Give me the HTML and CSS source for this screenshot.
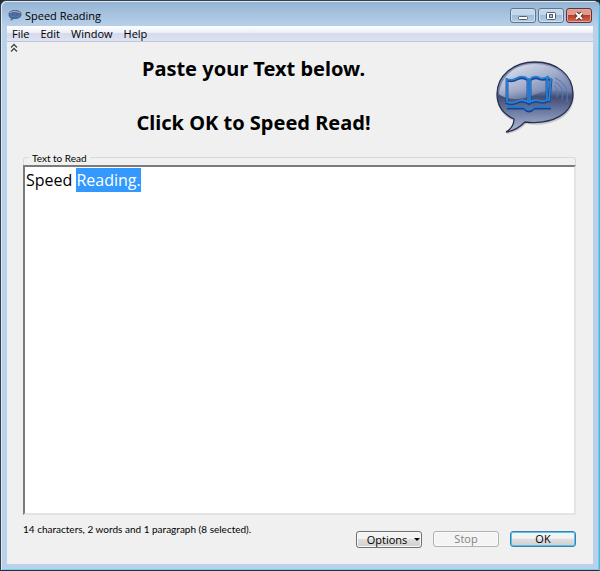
FILE: index.html
```
<!DOCTYPE html>
<html lang="en">
<head>
  <meta charset="UTF-8">
  <meta name="viewport" content="width=device-width, initial-scale=1.0">
  <title>Speed Reading</title>
  <link rel="stylesheet" href="styles.css">
</head>
<body>
  <div class="window">

    <!-- Title bar -->
    <header class="title-bar">
      <svg class="app-icon" viewBox="0 0 14 13" aria-hidden="true">
        <path d="M7 1C3 1 .5 3 .5 5.500c0 2 1 3.300 2.500 4L2.500 12l3-2C10 10.500 13.500 8.500 13.500 5.500S11 1 7 1z" fill="#50658f"/>
        <path d="M2 4q2-2 5-1.500t5 1" stroke="#a9b7d2" fill="none"/>
        <path d="M3 4.500v3h3.500l1 1 1-1H11v-3M7 4.500v3" stroke="#3a82cf" fill="none"/>
      </svg>
      <span class="title">Speed Reading</span>
      <div class="window-buttons">
        <button class="win-btn" aria-label="Minimize">
          <svg viewBox="0 0 12 10"><rect x="1.500" y="5.500" width="9" height="3" rx="1" fill="#fff" stroke="#535f70"/></svg>
        </button>
        <button class="win-btn" aria-label="Maximize">
          <svg viewBox="0 0 12 10"><rect x="1.500" y="1.500" width="9" height="7" rx="1" fill="#fff" stroke="#535f70"/><rect x="4.500" y="3.500" width="3" height="3" fill="#a9c4df" stroke="#535f70"/></svg>
        </button>
        <button class="win-btn close" aria-label="Close">
          <svg viewBox="0 0 12 10"><path d="M3 2l6 6M9 2L3 8" stroke="#5e3438" stroke-width="4"/><path d="M3 2l6 6M9 2L3 8" stroke="#fff" stroke-width="2"/></svg>
        </button>
      </div>
    </header>

    <!-- Menu -->
    <nav class="menu-bar">
      <button>File</button>
      <button>Edit</button>
      <button>Window</button>
      <button>Help</button>
    </nav>

    <main class="content">
      <div class="intro">
        <button class="collapse" aria-label="Collapse">
          <svg viewBox="0 0 8 10"><path d="M1 4.500l3-3 3 3M1 8.500l3-3 3 3" fill="none" stroke="#444" stroke-width="1.300"/></svg>
        </button>
        <h1>Paste your Text below.<br><br>Click OK to Speed Read!</h1>
        <svg class="logo" viewBox="0 0 80 80" aria-hidden="true">
          <defs>
            <linearGradient id="bubble" x1="0" y1="0" x2="0" y2="1">
              <stop offset="0" stop-color="#8c98bc"/>
              <stop offset=".4" stop-color="#7383ad"/>
              <stop offset=".5" stop-color="#404d74"/>
              <stop offset=".7" stop-color="#6c7aa2"/>
              <stop offset="1" stop-color="#b0bcd6"/>
            </linearGradient>
            <linearGradient id="shine" x1="0" y1="0" x2="1" y2="1">
              <stop offset="0" stop-color="#f0f2f8"/>
              <stop offset=".5" stop-color="#b4bdd6" stop-opacity=".7"/>
              <stop offset="1" stop-color="#5f70a0" stop-opacity=".2"/>
            </linearGradient>
          </defs>
          <path d="M41 6C19 6 2 19 2 38c0 12 6 20 17 25 0 6-3 10-8 13 9-1 15-5 20-10 27 4 48-8 48-28C79 19 62 6 41 6z" fill="#c6c8ce"/>
          <path d="M40 4C18 4 2 18 2 36c0 12 6 20 17 25 0 6-3 10-8 13 9-1 14-5 19-10 27 3 48-8 48-28C78 17 62 4 40 4z" fill="url(#bubble)" stroke="#28304c" stroke-width="1.300"/>
          <path d="M40 6C21 6 6 17 4 36c9 7 23 6 35 1s25-7 37-2C75 17 59 6 40 6z" fill="url(#shine)"/>
          <g fill="none" stroke="#1d438e" stroke-width="2.800">
            <path d="M12 22q5 2 10-1 6-3 11 1v23q-5-3-10-1-6 3-11 1zM35 22q5-4 10-1 4 1 7-1v23q-3 2-7 1-5-2-10 1zM52 20l4 2-2 22M33 46l2-1"/>
            <path d="M12 50h17q5 6 10 0h17"/>
          </g>
          <g fill="none" stroke="#2485dc" stroke-width="1.700">
            <path d="M12 21q5 2 10-1 6-3 11 1v23q-5-3-10-1-6 3-11 1zM35 21q5-4 10-1 4 1 7-1v23q-3 2-7 1-5-2-10 1zM52 19l4 2-2 22"/>
            <path d="M12 49h17q5 6 10 0h17"/>
          </g>
          <path d="M59 28q5 3 3 11M60 24q10 5 7 18M60 20q15 6 12 24" fill="none" stroke="#5878b0" stroke-width="1"/>
        </svg>
      </div>

      <div class="group">
        <label for="reader-text">Text to Read</label>
      </div>
      <textarea id="reader-text" spellcheck="false">Speed Reading.</textarea>

      <footer class="footer">
        <p class="status">14 characters, 2 words and 1 paragraph (8 selected).</p>
        <div class="actions">
          <button class="btn btn-options">Options <span class="arrow"></span></button>
          <button class="btn" disabled>Stop</button>
          <button class="btn btn-ok">OK</button>
        </div>
      </footer>
    </main>
  </div>

  <script>
    // Select the second word when the window opens
    const box = document.getElementById('reader-text');
    box.focus();
    box.setSelectionRange(6, 14);
  </script>
</body>
</html>
```
FILE: styles.css
```
* {
  box-sizing: border-box;
}

body {
  margin: 0;
  background: #202830;
  color: #000;
  font-family: "Open Sans", "Noto Sans", sans-serif;
  font-size: 11px;
}

button,
textarea {
  font: inherit;
  color: inherit;
}

.window {
  display: flex;
  flex-direction: column;
  min-height: 100vh;
  padding: 1px 6px 6px;
  background: linear-gradient(#93b3d3, #b9d1ea 26px, #b9d1ea);
  border: 1px solid #36404b;
  border-right-color: #4bbbd5;
  border-bottom-color: #20313d;
  border-radius: 6px 6px 0 0;
  box-shadow: inset 1px 1px #dce9f5, inset -1px -1px #73cfe9;
}

/* Title bar */
.title-bar {
  display: flex;
  align-items: center;
  height: 24px;
  padding: 3px 1px 0;
}

.app-icon {
  width: 14px;
  height: 13px;
}

.title {
  flex: 1;
  margin-left: 3px;
}

.window-buttons {
  display: flex;
  gap: 2px;
}

.win-btn {
  display: flex;
  align-items: center;
  justify-content: center;
  width: 26px;
  height: 15px;
  padding: 0;
  background: linear-gradient(#c4d8eb 45%, #9fbcd8 50%, #b5cfe7);
  border: 1px solid #60758d;
  border-radius: 3px;
  box-shadow: inset 0 0 0 1px #cfe0f0;
}

.win-btn svg {
  width: 12px;
  height: 10px;
}

.win-btn.close {
  background: linear-gradient(#dc9b8d 45%, #bd3c28 50%, #cf6d51);
  border-color: #692f35;
  box-shadow: inset 0 0 0 1px #e0a79b;
}

/* Menu */
.menu-bar {
  display: flex;
  height: 16px;
  background: linear-gradient(#fff, #eceff8 45%, #d5daec 50%, #dfe4f4);
  border-bottom: 1px solid #bfc5d6;
}

.menu-bar button {
  padding: 0 6px 0 5px;
  background: none;
  border: none;
  line-height: 14px;
}

.content {
  flex: 1;
  display: flex;
  flex-direction: column;
  padding: 0 17px 16px 16px;
  background: #f0f0f0;
}

.intro {
  display: flex;
  height: 108px;
}

.collapse {
  align-self: flex-start;
  width: 8px;
  margin: 1px 0 0 -13px;
  padding: 0;
  background: none;
  border: none;
  line-height: 0;
}

.collapse svg {
  width: 8px;
  height: 10px;
}

h1 {
  flex: 1;
  margin: 13px 6px 0 0;
  font-family: "Noto Sans", "Open Sans", sans-serif;
  font-size: 20px;
  line-height: 27px;
  text-align: center;
}

.logo {
  width: 80px;
  height: 80px;
  margin: 16px 1px 0 0;
}

/* Group caption over the text box */
.group {
  display: flex;
  align-items: center;
  height: 15px;
  font-family: Lato, "Open Sans", sans-serif;
  font-size: 10px;
}

.group::before,
.group::after {
  content: "";
  width: 5px;
  height: 8px;
  margin-top: 8px;
  border: 1px solid #d9d9d9;
  border-width: 1px 0 0 1px;
  border-radius: 3px 0 0;
}

.group::after {
  flex: 1;
  border-width: 1px 1px 0 0;
  border-radius: 0 3px 0 0;
}

.group label {
  margin: 0 3px;
}

textarea {
  display: block;
  flex: 1;
  width: 100%;
  padding: 1px;
  background: #fff;
  border: 2px solid #e3e3e3;
  border-top-color: #7b7b7b;
  border-left-color: #7b7b7b;
  outline: none;
  resize: none;
  font-size: 16px;
  line-height: 24px;
}

textarea::selection {
  background: #3399ff;
  color: #fff;
}

/* Footer */
.footer {
  display: flex;
  justify-content: space-between;
  padding-top: 6px;
}

.status {
  margin: 0;
  font-family: Lato, "Open Sans", sans-serif;
  font-size: 10px;
  line-height: 16px;
}

.actions {
  display: flex;
  align-items: flex-start;
  gap: 11px;
  margin-top: 10px;
}

.btn {
  width: 66px;
  height: 16px;
  padding: 0;
  background: linear-gradient(#f3f3f3 45%, #dedede 50%, #d0d0d0);
  border: 1px solid #707070;
  border-radius: 3px;
  box-shadow: inset 0 0 0 1px #fafafa;
  line-height: 14px;
}

.btn:disabled {
  background: #f4f4f4;
  border-color: #adb2b5;
  color: #838383;
}

.btn-options {
  display: flex;
  align-items: center;
  justify-content: center;
  gap: 7px;
  height: 17px;
  padding-left: 9px;
}

.arrow {
  border: 3px solid transparent;
  border-top-color: #000;
  border-bottom: 0;
}

.btn-ok {
  border-color: #3c7fb1;
  box-shadow: inset 0 0 0 1px #53c5ec;
}
```
